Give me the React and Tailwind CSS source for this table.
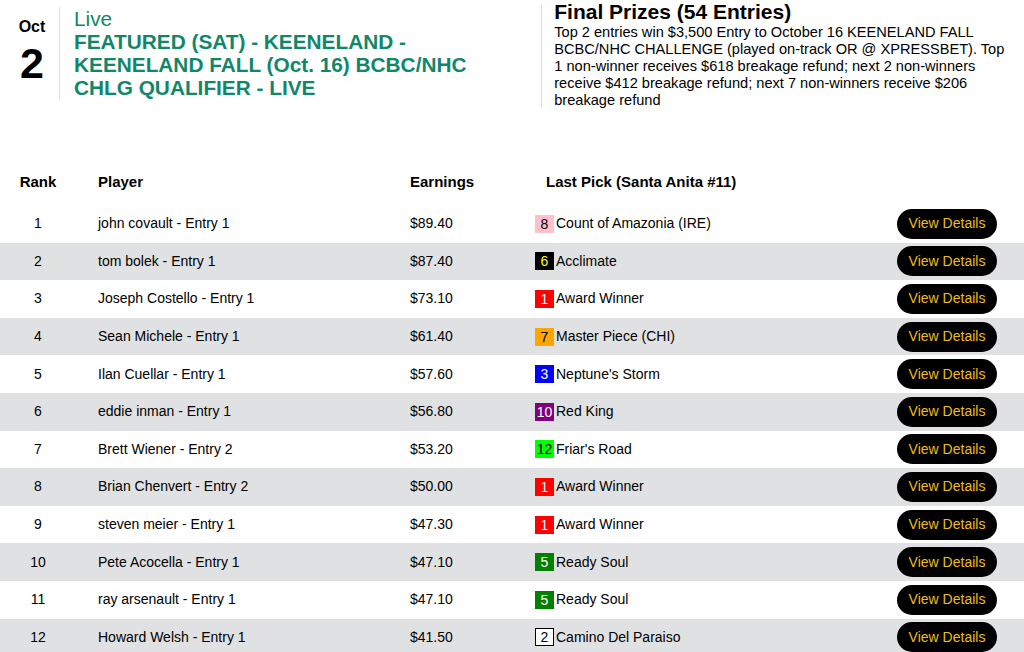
const rows = [
    { rank: 1, player: "john covault - Entry 1", earnings: "$89.40", num: "8", horse: "Count of Amazonia (IRE)", badge: "bg-[#ffc0cb] text-black" },
    { rank: 2, player: "tom bolek - Entry 1", earnings: "$87.40", num: "6", horse: "Acclimate", badge: "bg-black text-[#ffff00]" },
    { rank: 3, player: "Joseph Costello - Entry 1", earnings: "$73.10", num: "1", horse: "Award Winner", badge: "bg-[#ff0000] text-white" },
    { rank: 4, player: "Sean Michele - Entry 1", earnings: "$61.40", num: "7", horse: "Master Piece (CHI)", badge: "bg-[#ffa500] text-black" },
    { rank: 5, player: "Ilan Cuellar - Entry 1", earnings: "$57.60", num: "3", horse: "Neptune's Storm", badge: "bg-[#0000ff] text-white" },
    { rank: 6, player: "eddie inman - Entry 1", earnings: "$56.80", num: "10", horse: "Red King", badge: "bg-[#800080] text-white" },
    { rank: 7, player: "Brett Wiener - Entry 2", earnings: "$53.20", num: "12", horse: "Friar's Road", badge: "bg-[#00ff00] text-black" },
    { rank: 8, player: "Brian Chenvert - Entry 2", earnings: "$50.00", num: "1", horse: "Award Winner", badge: "bg-[#ff0000] text-white" },
    { rank: 9, player: "steven meier - Entry 1", earnings: "$47.30", num: "1", horse: "Award Winner", badge: "bg-[#ff0000] text-white" },
    { rank: 10, player: "Pete Acocella - Entry 1", earnings: "$47.10", num: "5", horse: "Ready Soul", badge: "bg-[#008000] text-white" },
    { rank: 11, player: "ray arsenault - Entry 1", earnings: "$47.10", num: "5", horse: "Ready Soul", badge: "bg-[#008000] text-white" },
    { rank: 12, player: "Howard Welsh - Entry 1", earnings: "$41.50", num: "2", horse: "Camino Del Paraiso", badge: "bg-white text-black border border-black" },
];

export default function App() {
    return (
        <div className="w-[1024px] bg-white text-black font-['Liberation_Sans',Arial,sans-serif]">
            {/* top info */}
            <div className="flex h-[110px]">
                <div className="flex w-[541px] pt-[7px]">
                    <div className="w-[60px] h-[93px] pl-[5px] pt-[11px] text-center font-bold border-r border-[#dddddd]">
                        <div className="text-[16px] leading-[18px]">Oct</div>
                        <div className="text-[43px] leading-[54px]">2</div>
                    </div>
                    <div className="w-[440px] pl-[14px] text-[20.8px] leading-[23px] text-[#118769]">
                        <div>Live</div>
                        <div className="font-bold">
                            FEATURED (SAT) - KEENELAND - KEENELAND FALL (Oct. 16) BCBC/NHC CHLG QUALIFIER - LIVE
                        </div>
                    </div>
                </div>
                <div className="flex flex-1">
                    <div className="w-px bg-[#dddddd] mt-[5px] mb-[3px]" />
                    <div className="pl-[13px] pr-[14px]">
                        <div className="text-[21px] leading-[24px] font-bold">Final Prizes (54 Entries)</div>
                        <div className="text-[14.6px] leading-[17px]">
                            Top 2 entries win $3,500 Entry to October 16 KEENELAND FALL BCBC/NHC CHALLENGE (played on-track OR @ XPRESSBET). Top 1 non-winner receives $618 breakage refund; next 2 non-winners receive $412 breakage refund; next 7 non-winners receive $206 breakage refund
                        </div>
                    </div>
                </div>
            </div>

            {/* leaderboard */}
            <div className="mt-[63px]">
                <div className="flex h-[32px] text-[15px] leading-[17px] font-bold">
                    <div className="w-[76px] text-center">Rank</div>
                    <div className="w-[334px] pl-[22px]">Player</div>
                    <div className="w-[125px]">Earnings</div>
                    <div className="flex-1 pl-[11px]">Last Pick (Santa Anita #11)</div>
                </div>

                {rows.map((r) => (
                    <div
                        key={r.rank}
                        className={`flex items-center h-[37.6px] text-[14px] ${r.rank % 2 === 0 ? "bg-[#e0e1e3]" : "bg-white"}`}
                    >
                        <div className="w-[76px] text-center">{r.rank}</div>
                        <div className="w-[334px] pl-[22px]">{r.player}</div>
                        <div className="w-[125px]">{r.earnings}</div>
                        <div className="flex flex-1 items-center gap-[2px]">
                            <span className={`flex items-center justify-center w-[19px] h-[18px] leading-none ${r.badge}`}>
                                {r.num}
                            </span>
                            <span>{r.horse}</span>
                        </div>
                        <div className="pr-[27px]">
                            <button className="w-[100px] h-[30px] rounded-full bg-black text-[#eebd1a] text-[14px]">
                                View Details
                            </button>
                        </div>
                    </div>
                ))}
            </div>
        </div>
    );
}
